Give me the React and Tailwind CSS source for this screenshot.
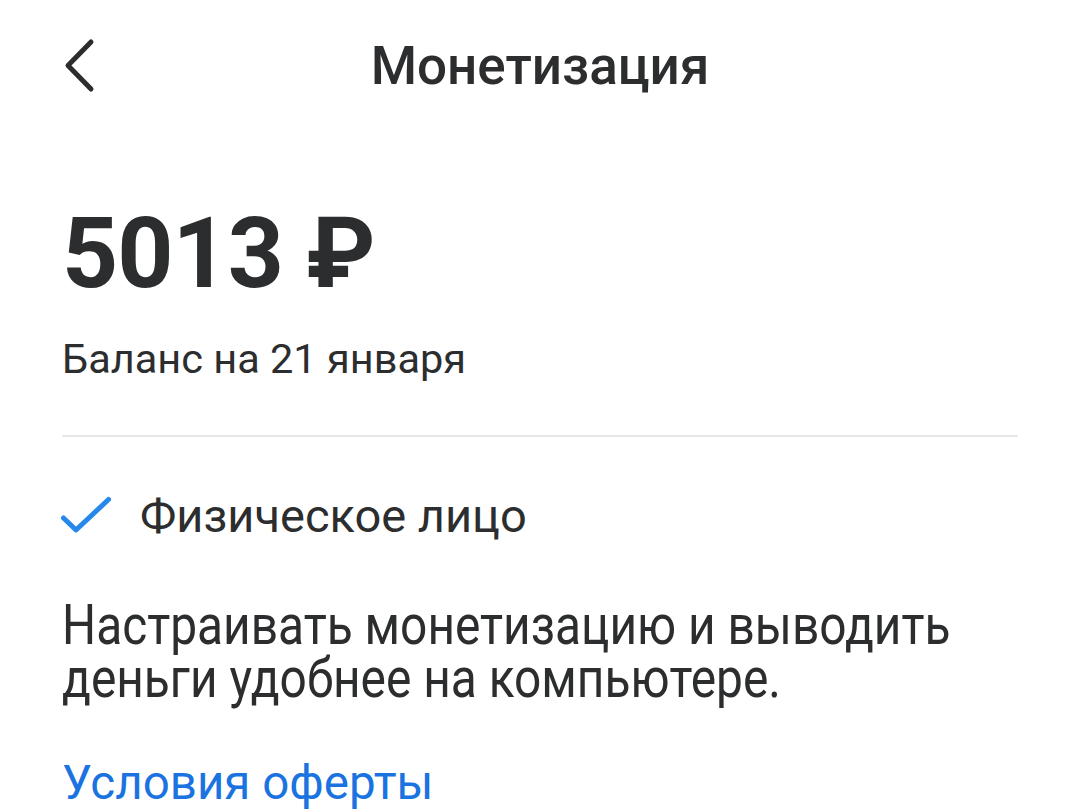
export default function App() {
  return (
    <div className="w-[1080px] h-[810px] bg-white overflow-hidden text-[#2c2d2e]" style={{ fontFamily: 'Roboto, "Noto Sans", sans-serif' }}>
      <div className="relative h-[135px] flex items-center justify-center">
        <svg className="absolute left-[60px] top-[38px]" width="40" height="56" viewBox="0 0 40 56" fill="none">
          <path d="M31 4 L8 27.5 L31 51" stroke="#2c2d2e" strokeWidth="5" strokeLinecap="round" strokeLinejoin="round" />
        </svg>
        <div className="text-[53px] font-medium leading-none -mt-[2px]">Монетизация</div>
      </div>
      <div className="px-[62px]">
        <div className="mt-[70px] text-[98px] font-bold leading-none tracking-[-1px]">5013 ₽</div>
        <div className="mt-[35px] text-[41.5px] leading-none">Баланс на 21 января</div>
        <div className="mt-[55px] h-[2px] bg-[#e7e8ec]"></div>
        <div className="mt-[55px] flex items-center gap-[28px]">
          <svg className="-ml-[2px]" width="52" height="38" viewBox="0 0 52 38" fill="none">
            <path d="M3.5 22 L16 34 L48.5 3.5" stroke="#2688eb" strokeWidth="5" strokeLinecap="round" strokeLinejoin="round" />
          </svg>
          <div className="text-[47px] leading-none">Физическое лицо</div>
        </div>
        <div className="mt-[60px] text-[55px] leading-[53px] whitespace-nowrap origin-left scale-x-[0.87]">
          Настраивать монетизацию и выводить<br />деньги удобнее на компьютере.
        </div>
        <div className="mt-[55px] text-[47.5px] leading-none text-[#1a73e0]">Условия оферты</div>
      </div>
    </div>
  );
}
